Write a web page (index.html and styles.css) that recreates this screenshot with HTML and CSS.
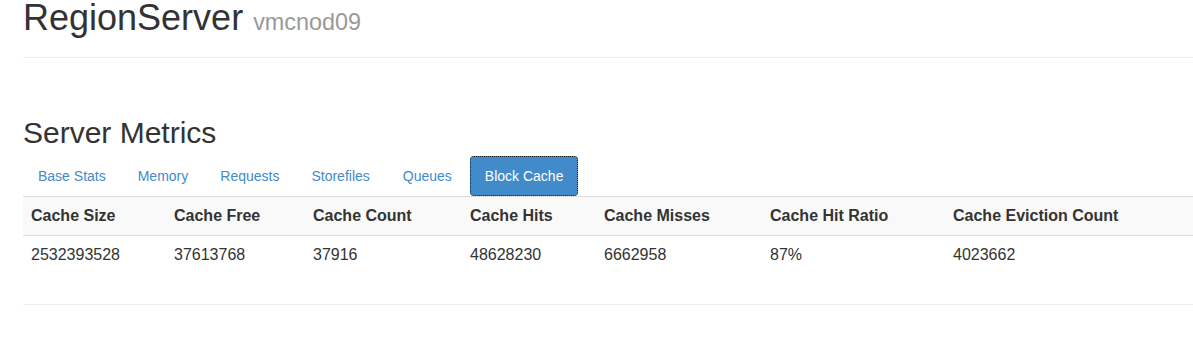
FILE: index.html
```html
<!DOCTYPE html>
<html>
<head>
<meta charset="utf-8">
<title>RegionServer</title>
<link rel="stylesheet" href="styles.css">
</head>
<body>
<div class="container">
  <div class="page-header">
    <h1>RegionServer <small>vmcnod09</small></h1>
  </div>
  <section class="metrics">
    <h2>Server Metrics</h2>
    <ul class="nav-pills">
      <li><a href="#">Base Stats</a></li>
      <li><a href="#">Memory</a></li>
      <li><a href="#">Requests</a></li>
      <li><a href="#">Storefiles</a></li>
      <li class="wide"><a href="#">Queues</a></li>
      <li class="active"><a href="#">Block Cache</a></li>
    </ul>
    <table class="table">
      <colgroup>
        <col class="c1"><col class="c2"><col class="c3"><col class="c4"><col class="c5"><col class="c6"><col class="c7">
      </colgroup>
      <tr class="head">
        <th>Cache Size</th>
        <th>Cache Free</th>
        <th>Cache Count</th>
        <th>Cache Hits</th>
        <th>Cache Misses</th>
        <th>Cache Hit Ratio</th>
        <th>Cache Eviction Count</th>
      </tr>
      <tr>
        <td>2532393528</td>
        <td>37613768</td>
        <td>37916</td>
        <td>48628230</td>
        <td>6662958</td>
        <td>87%</td>
        <td>4023662</td>
      </tr>
    </table>
  </section>
  <hr class="rule">
</div>
</body>
</html>
```

FILE: styles.css
```css
html, body {
  margin: 0;
  padding: 0;
  background: #fff;
  overflow: hidden;
}
body {
  font-family: "Liberation Sans", Arial, Helvetica, sans-serif;
  font-size: 14px;
  line-height: 20px;
  color: #333;
}
.container {
  width: 1170px;
  margin-left: 23px;
}
.page-header {
  padding-bottom: 21px;
  border-bottom: 1px solid #eee;
}
h1 {
  margin: 0;
  font-size: 36px;
  line-height: 36px;
  font-weight: 500;
  color: #333;
}
h1 small {
  font-size: 65%;
  line-height: 1;
  font-weight: normal;
  color: #999;
}
h2 {
  margin: 58px 0 7px;
  font-size: 30px;
  line-height: 33px;
  font-weight: 500;
  color: #333;
}
.nav-pills {
  list-style: none;
  margin: 0;
  padding: 0;
  display: flex;
}
.nav-pills li + li {
  margin-left: 2px;
}
.nav-pills li.wide a {
  padding-left: 16px;
  padding-right: 16px;
}
.nav-pills a {
  display: block;
  padding: 10px 15px;
  color: #428bca;
  text-decoration: none;
  border-radius: 4px;
}
.nav-pills .active a {
  background: #428bca;
  color: #fff;
  padding: 9px 14px;
  border: 1px dotted #1a1a1a;
}
.table {
  width: 1170px;
  table-layout: fixed;
  border-collapse: collapse;
  border-spacing: 0;
  font-size: 16px;
}
.c1 { width: 143px; }
.c2 { width: 139px; }
.c3 { width: 157px; }
.c4 { width: 134px; }
.c5 { width: 166px; }
.c6 { width: 183px; }
.c7 { width: 248px; }
.table th,
.table td {
  text-align: left;
  padding: 8px;
  line-height: 22px;
  border-top: 1px solid #ddd;
  vertical-align: top;
  white-space: nowrap;
}
.table th {
  font-weight: bold;
}
.table .head {
  background: #f9f9f9;
}
.rule {
  margin: 30px 0 0;
  border: 0;
  border-top: 1px solid #eee;
}
```
